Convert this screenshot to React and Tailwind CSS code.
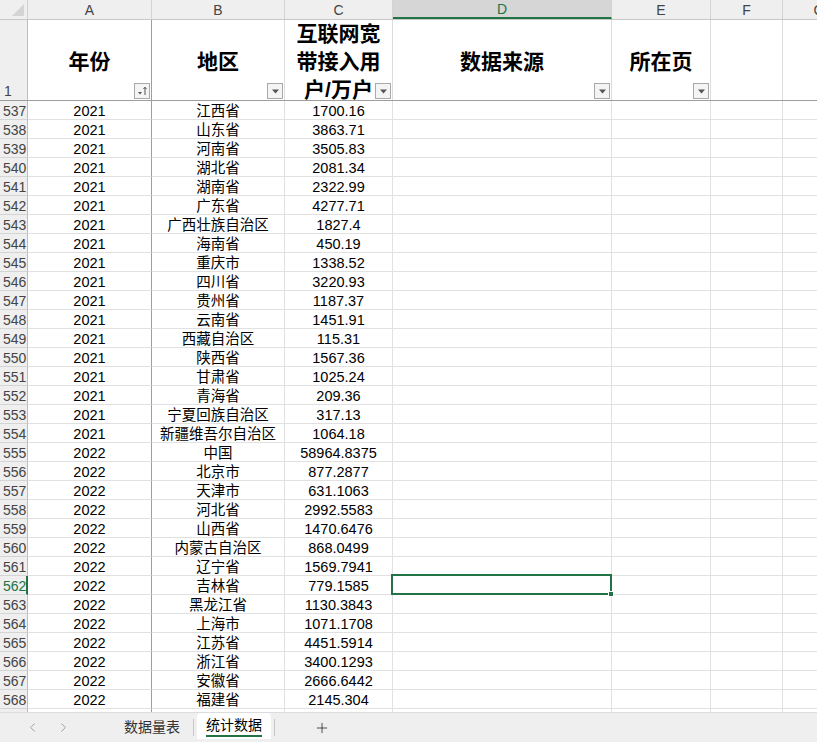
import { ChevronLeft, ChevronRight, Plus } from 'lucide-react'

const rows = [
  [537, 2021, '江西省', '1700.16'],
  [538, 2021, '山东省', '3863.71'],
  [539, 2021, '河南省', '3505.83'],
  [540, 2021, '湖北省', '2081.34'],
  [541, 2021, '湖南省', '2322.99'],
  [542, 2021, '广东省', '4277.71'],
  [543, 2021, '广西壮族自治区', '1827.4'],
  [544, 2021, '海南省', '450.19'],
  [545, 2021, '重庆市', '1338.52'],
  [546, 2021, '四川省', '3220.93'],
  [547, 2021, '贵州省', '1187.37'],
  [548, 2021, '云南省', '1451.91'],
  [549, 2021, '西藏自治区', '115.31'],
  [550, 2021, '陕西省', '1567.36'],
  [551, 2021, '甘肃省', '1025.24'],
  [552, 2021, '青海省', '209.36'],
  [553, 2021, '宁夏回族自治区', '317.13'],
  [554, 2021, '新疆维吾尔自治区', '1064.18'],
  [555, 2022, '中国', '58964.8375'],
  [556, 2022, '北京市', '877.2877'],
  [557, 2022, '天津市', '631.1063'],
  [558, 2022, '河北省', '2992.5583'],
  [559, 2022, '山西省', '1470.6476'],
  [560, 2022, '内蒙古自治区', '868.0499'],
  [561, 2022, '辽宁省', '1569.7941'],
  [562, 2022, '吉林省', '779.1585'],
  [563, 2022, '黑龙江省', '1130.3843'],
  [564, 2022, '上海市', '1071.1708'],
  [565, 2022, '江苏省', '4451.5914'],
  [566, 2022, '浙江省', '3400.1293'],
  [567, 2022, '安徽省', '2666.6442'],
  [568, 2022, '福建省', '2145.304'],
  [569, '', '', ''],
]

const font = "font-['Liberation_Sans','Noto_Sans_CJK_SC',sans-serif]"

function FilterButton({ sort }) {
  return (
    <div className="absolute right-[1px] bottom-[1px] w-[16px] h-[16px] border border-[#a9a9a9] bg-[#f4f4f4] flex items-center justify-center">
      {sort ? (
        <svg width="12" height="10" viewBox="0 0 12 10">
          <path d="M2 6 L6 6 L4 8.5 Z" fill="#555" />
          <path d="M9 9 V1.5 M7.5 3 L9 1.2 L10.5 3" stroke="#555" strokeWidth="1" fill="none" />
        </svg>
      ) : (
        <svg width="9" height="5" viewBox="0 0 9 5">
          <path d="M1 0.5 H8 L4.5 4.5 Z" fill="#555" />
        </svg>
      )}
    </div>
  )
}

function HeaderCell({ width, children, sort, filter = true, dark }) {
  return (
    <div
      className={`relative h-full shrink-0 border-r flex items-center justify-center ${
        dark ? 'border-[#9e9e9e]' : 'border-[#dcdcdc]'
      }`}
      style={{ width }}
    >
      <div className="pt-[3px] text-[21px] leading-[28px] font-bold text-black text-center">{children}</div>
      {filter && <FilterButton sort={sort} />}
    </div>
  )
}

export default function App() {
  return (
    <div className={`w-[817px] h-[742px] overflow-hidden bg-white flex flex-col ${font}`}>
      <div className="h-[712px] overflow-hidden">
        {/* column letters */}
        <div className="flex h-[20px] bg-[#efefef] border-b border-[#c8c8c8] text-[14px] leading-[20px] text-[#444]">
          <div className="w-[28px] shrink-0 border-r border-[#d0d0d0] relative">
            <div className="absolute right-[3px] bottom-[3px] w-0 h-0 border-l-[12px] border-l-transparent border-b-[12px] border-b-[#d4d4d4]" />
          </div>
          <div className="w-[124px] shrink-0 border-r border-[#d4d4d4] flex items-center justify-center">A</div>
          <div className="w-[133px] shrink-0 border-r border-[#d4d4d4] flex items-center justify-center">B</div>
          <div className="w-[108px] shrink-0 border-r border-[#d4d4d4] flex items-center justify-center">C</div>
          <div className="w-[219px] shrink-0 border-r border-[#d4d4d4] bg-[#d6d6d6] border-b-2 border-b-[#217346] flex items-center justify-center text-[#217346]">D</div>
          <div className="w-[99px] shrink-0 border-r border-[#d4d4d4] flex items-center justify-center">E</div>
          <div className="w-[72px] shrink-0 border-r border-[#d4d4d4] flex items-center justify-center">F</div>
          <div className="w-[72px] shrink-0 flex items-center justify-center">G</div>
        </div>

        {/* header row */}
        <div className="flex h-[81px] border-b border-[#9e9e9e]">
          <div className="w-[28px] shrink-0 bg-[#efefef] border-r border-[#bdbdbd] flex items-end pl-[4px] text-[14px] leading-[18px] text-[#444]">1</div>
          <HeaderCell width={124} sort dark>年份</HeaderCell>
          <HeaderCell width={133}>地区</HeaderCell>
          <HeaderCell width={108}>
            互联网宽<br />带接入用<br />户/万户
          </HeaderCell>
          <HeaderCell width={219}>数据来源</HeaderCell>
          <HeaderCell width={99}>所在页</HeaderCell>
          <HeaderCell width={72} filter={false} />
          <HeaderCell width={72} filter={false} />
        </div>

        {/* data rows */}
        {rows.map(([num, year, region, value]) => {
          const active = num === 562
          return (
            <div key={num} className="flex h-[19px] text-[14.5px] leading-[18px] text-black">
              <div
                className={`w-[28px] shrink-0 bg-[#efefef] border-b border-[#d4d4d4] pl-[3px] pt-[1px] text-[14px] ${
                  active ? 'text-[#217346] border-r-2 border-r-[#217346]' : 'text-[#444] border-r border-r-[#bdbdbd]'
                }`}
              >
                {num}
              </div>
              <div className="w-[124px] shrink-0 pt-[1px] border-r border-r-[#9e9e9e] border-b border-[#e1e1e1] text-center">{year}</div>
              <div className="w-[133px] shrink-0 pt-[1px] border-r border-b border-[#e1e1e1] text-center whitespace-nowrap">{region}</div>
              <div className="w-[108px] shrink-0 pt-[1px] border-r border-b border-[#e1e1e1] text-center">{value}</div>
              <div className="w-[219px] shrink-0 border-r border-b border-[#e1e1e1] relative">
                {active && (
                  <div className="absolute left-[-2px] top-[-2px] w-[221px] h-[21px] border-2 border-[#217346] z-10">
                    <div className="absolute right-[-4px] bottom-[-4px] w-[6px] h-[6px] bg-[#217346] border border-white" />
                  </div>
                )}
              </div>
              <div className="w-[99px] shrink-0 border-r border-b border-[#e1e1e1]" />
              <div className="w-[72px] shrink-0 border-r border-b border-[#e1e1e1]" />
              <div className="w-[72px] shrink-0 border-b border-[#e1e1e1]" />
            </div>
          )
        })}
      </div>

      {/* sheet tabs */}
      <div className="h-[30px] bg-[#efefef] border-t border-[#dcdcdc] flex items-stretch text-[14px] text-[#333]">
        <div className="w-[56px] pl-[25px] flex items-center text-[#9a9a9a]">
          <ChevronLeft size={15} strokeWidth={1.5} />
        </div>
        <div className="w-[55px] flex items-center text-[#9a9a9a]">
          <ChevronRight size={15} strokeWidth={1.5} />
        </div>
        <div className="px-[13px] flex items-center">数据量表</div>
        <div className="w-[1px] my-[6px] bg-[#c6c6c6]" />
        <div className="ml-[3px] w-[74px] bg-white rounded-t-[4px] mb-[3px] flex flex-col items-center justify-center">
          <span className="leading-[18px] text-black">统计数据</span>
          <span className="w-[56px] h-[2px] bg-[#217346] mt-[1px]" />
        </div>
        <div className="ml-[3px] w-[1px] my-[6px] bg-[#c6c6c6]" />
        <div className="ml-[39px] flex items-center text-[#333]">
          <Plus size={16} strokeWidth={1.3} />
        </div>
      </div>
    </div>
  )
}
